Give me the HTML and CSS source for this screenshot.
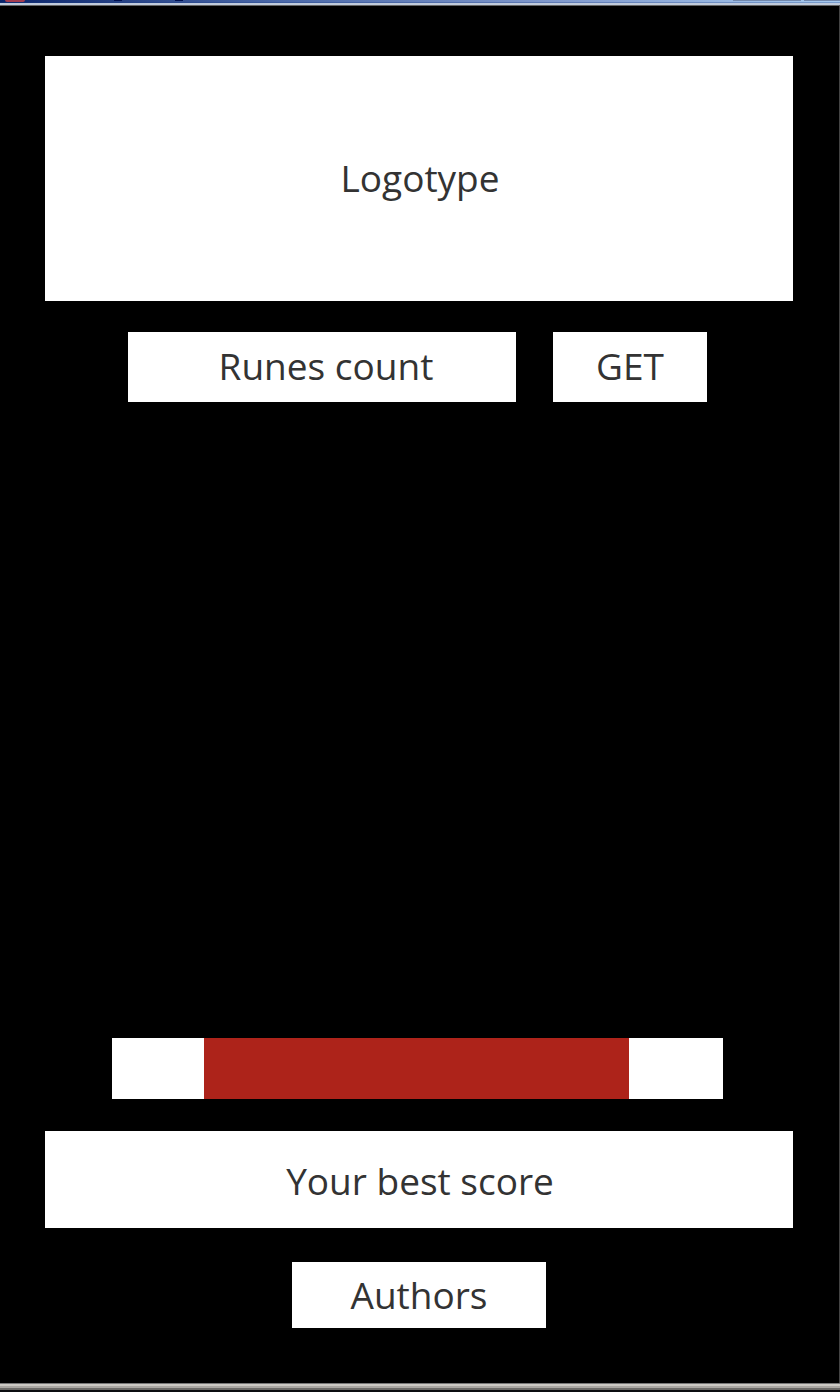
FILE: index.html
```html
<!DOCTYPE html>
<html lang="en">
<head>
<meta charset="utf-8">
<meta name="viewport" content="width=device-width, initial-scale=1">
<title>Main menu</title>
<link rel="stylesheet" href="styles.css">
</head>
<body>
<div class="window">
  <header class="titlebar">
    <span class="titlebar-icon"></span>
    <span class="titlebar-mark"></span>
    <span class="titlebar-mark titlebar-mark-last"></span>
    <span class="titlebar-button"></span>
    <span class="titlebar-button"></span>
  </header>
  <main class="screen">
    <h1 class="panel logo">Logotype</h1>
    <div class="runes">
      <div class="panel runes-count">Runes count</div>
      <button class="panel runes-get" type="button">GET</button>
    </div>
    <div class="bar"><div class="bar-fill"></div></div>
    <div class="panel score">Your best score</div>
    <button class="panel authors" type="button">Authors</button>
  </main>
  <footer class="frame-bottom"></footer>
</div>
</body>
</html>
```
FILE: styles.css
```css
* {
  box-sizing: border-box;
}

body {
  margin: 0;
  background: #000;
  color: #333;
  font-family: "Open Sans", "Noto Sans", sans-serif;
  font-size: 37px;
  line-height: 50px;
}

.window {
  display: flex;
  flex-direction: column;
  min-height: 100vh;
}

.titlebar {
  display: flex;
  gap: 3px;
  height: 5px;
  padding-left: 5px;
  background: linear-gradient(90deg, #0a246a, #4a68a8 33%, #8099cc 66%, #a6caf0);
  border-bottom: 2px solid #c0cbdc;
  box-shadow: inset 0 -1px #1a3a8050;
}

.titlebar-icon {
  width: 20px;
  height: 2px;
  margin-right: 86px;
  border-radius: 0 0 8px 8px;
  background: #a33c50;
}

.titlebar-mark {
  width: 8px;
  height: 1px;
  background: #001050;
}

.titlebar-mark-last {
  margin: 0 auto 0 50px;
}

.titlebar-button {
  width: 68px;
  height: 1px;
  background: #7288ac;
}

.titlebar-button:last-child {
  width: 36px;
}

.screen {
  flex: 1;
  display: flex;
  flex-direction: column;
  padding: 50px 46px 55px 45px;
  border-right: 1px solid #444;
  border-top: 1px solid #666;
}

.panel {
  display: flex;
  align-items: center;
  justify-content: center;
  margin: 0;
  padding: 9px 0 11px;
  border: 0;
  border-radius: 0;
  background: #fff;
  color: inherit;
  font: inherit;
}

.logo {
  padding: 97px 0 98px 2px;
}

.runes {
  display: grid;
  grid-template-columns: 388fr 154fr;
  gap: 37px;
  margin: 31px 86px 0 83px;
}

.runes-count {
  padding-left: 8px;
}

.bar {
  height: 61px;
  margin: auto 70px 32px 67px;
  padding: 0 94px 0 92px;
  background: #fff;
}

.bar-fill {
  height: 100%;
  background: #ad231a;
}

.score {
  padding: 25px 0 22px 2px;
}

.authors {
  align-self: center;
  margin-top: 34px;
  padding: 8px 59px;
}

.frame-bottom {
  height: 9px;
  background: linear-gradient(#777 1px, #ccc9c3 1px 3px, #aaa7a2 3px 5px, #6c6a67 5px 7px, #0b0d10 7px);
}
```
